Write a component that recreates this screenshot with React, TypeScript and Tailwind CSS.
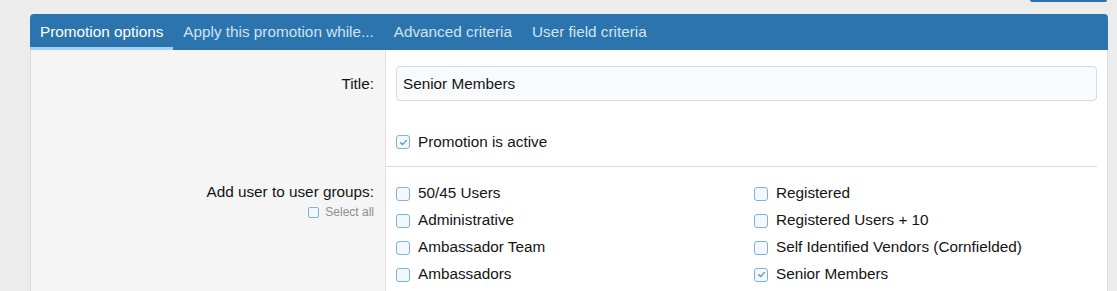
import React from "react";

const tabs = [
  "Promotion options",
  "Apply this promotion while...",
  "Advanced criteria",
  "User field criteria",
];

const groups = [
  { label: "50/45 Users", checked: false },
  { label: "Registered", checked: false },
  { label: "Administrative", checked: false },
  { label: "Registered Users + 10", checked: false },
  { label: "Ambassador Team", checked: false },
  { label: "Self Identified Vendors (Cornfielded)", checked: false },
  { label: "Ambassadors", checked: false },
  { label: "Senior Members", checked: true },
];

const Box = ({ checked, small }: { checked?: boolean; small?: boolean }) => (
  <span
    className={
      small
        ? "flex w-[11px] h-[11px] shrink-0 items-center justify-center rounded-[2px] border-[1.5px] border-[#7db2df] bg-[#f2f8fd]"
        : "flex w-[14px] h-[14px] shrink-0 items-center justify-center rounded-[3px] border-[1.5px] border-[#7db2df] bg-[#f2f8fd]"
    }
  >
    {checked && (
      <svg width="9" height="9" viewBox="0 0 10 10" fill="none">
        <path
          d="M1.8 5.2 L4 7.3 L8.3 2.6"
          stroke="#4f8fc8"
          strokeWidth="1.4"
          strokeLinecap="round"
          strokeLinejoin="round"
        />
      </svg>
    )}
  </span>
);

const App = () => {
  return (
    <div className="h-[291px] overflow-hidden bg-[#ececec] font-['Liberation_Sans',Arial,sans-serif] text-[15.3px] text-[#141414]">
      <div className="flex h-[14px] justify-end pr-[10px]">
        <div className="h-[2px] w-[77px] rounded-b-[3px] bg-[#2a6fa8]" />
      </div>
      <div className="ml-[30px] w-[1078px]">
        {/* tab bar */}
        <div className="flex h-[36px] rounded-t-[4px] bg-[#2c74ae]">
          {tabs.map((t, i) => (
            <div
              key={t}
              className={
                i === 0
                  ? "flex items-center border-b-[3px] border-[#a6d0f2] px-[10px] pt-[3px] text-white"
                  : "flex items-center px-[10px] text-[#cfe3f4]"
              }
            >
              {t}
            </div>
          ))}
        </div>
        {/* body */}
        <div className="flex h-[241px] border-l border-r border-[#dadada] bg-white">
          <div className="flex w-[354px] shrink-0 flex-col items-end bg-[#f5f5f5] pr-[11px]">
            <div className="mt-[17px] flex h-[35px] items-center">Title:</div>
            <div className="mt-[77px] flex h-[27px] items-center">Add user to user groups:</div>
            <div className="flex h-[12px] items-center gap-[6px] text-[12px] text-[#8e8e8e]">
              <Box small />
              Select all
            </div>
          </div>
          <div className="flex-1 border-l border-[#e2e2e2]">
            <div className="border-b border-[#dcdcdc] mr-[10px]">
              <div className="pl-[10px] pt-[16px]">
                <div className="flex h-[35px] items-center rounded-[4px] border border-[#d6dadf] bg-[#f8fbfd] px-[6px] pt-[1px]">
                  Senior Members
                </div>
              </div>
              <div className="mt-[31px] mb-[14px] flex h-[20px] items-center gap-[8px] pl-[10px]">
                <Box checked />
                Promotion is active
              </div>
            </div>
            <div className="grid grid-cols-[358px_1fr] pl-[10px] pt-[13px]">
              {groups.map((g) => (
                <div key={g.label} className="flex h-[27px] items-center gap-[8px]">
                  <Box checked={g.checked} />
                  {g.label}
                </div>
              ))}
            </div>
          </div>
        </div>
      </div>
    </div>
  );
};

export default App;
